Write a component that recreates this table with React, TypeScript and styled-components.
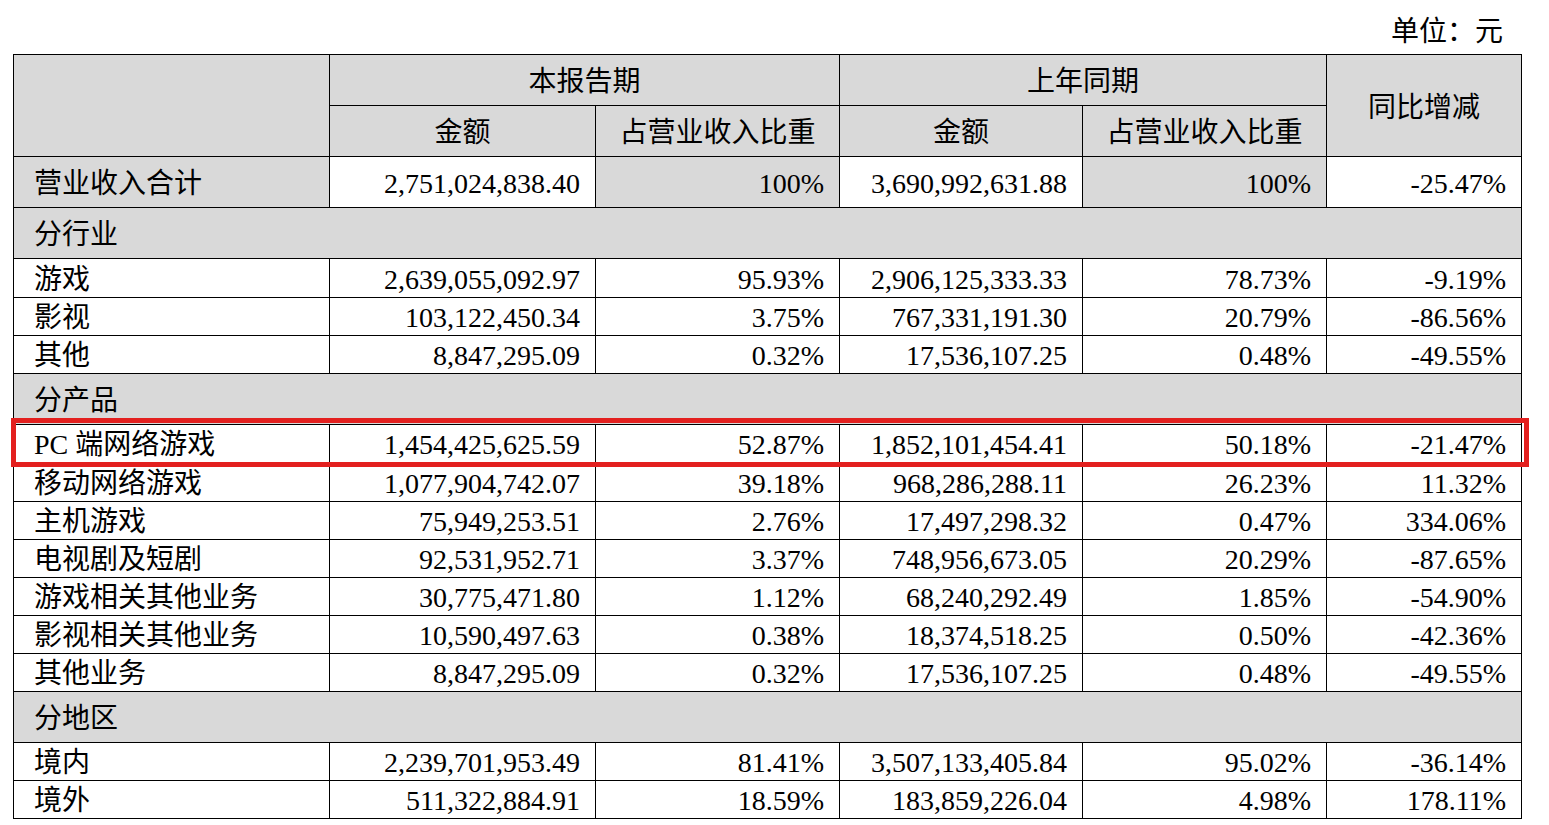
import React, { useLayoutEffect, useRef, useState } from 'react';
import styled, { createGlobalStyle } from 'styled-components';

type Row =
    | { kind: 'section'; label: string }
    | {
          kind: 'data';
          label: string;
          cur: string;
          curPct: string;
          prev: string;
          prevPct: string;
          change: string;
          highlight?: boolean;
          roomy?: boolean;
      };

const rows: Row[] = [
    { kind: 'section', label: '分行业' },
    { kind: 'data', label: '游戏', cur: '2,639,055,092.97', curPct: '95.93%', prev: '2,906,125,333.33', prevPct: '78.73%', change: '-9.19%', roomy: true },
    { kind: 'data', label: '影视', cur: '103,122,450.34', curPct: '3.75%', prev: '767,331,191.30', prevPct: '20.79%', change: '-86.56%' },
    { kind: 'data', label: '其他', cur: '8,847,295.09', curPct: '0.32%', prev: '17,536,107.25', prevPct: '0.48%', change: '-49.55%' },
    { kind: 'section', label: '分产品' },
    { kind: 'data', label: 'PC 端网络游戏', cur: '1,454,425,625.59', curPct: '52.87%', prev: '1,852,101,454.41', prevPct: '50.18%', change: '-21.47%', highlight: true },
    { kind: 'data', label: '移动网络游戏', cur: '1,077,904,742.07', curPct: '39.18%', prev: '968,286,288.11', prevPct: '26.23%', change: '11.32%', roomy: true },
    { kind: 'data', label: '主机游戏', cur: '75,949,253.51', curPct: '2.76%', prev: '17,497,298.32', prevPct: '0.47%', change: '334.06%' },
    { kind: 'data', label: '电视剧及短剧', cur: '92,531,952.71', curPct: '3.37%', prev: '748,956,673.05', prevPct: '20.29%', change: '-87.65%' },
    { kind: 'data', label: '游戏相关其他业务', cur: '30,775,471.80', curPct: '1.12%', prev: '68,240,292.49', prevPct: '1.85%', change: '-54.90%' },
    { kind: 'data', label: '影视相关其他业务', cur: '10,590,497.63', curPct: '0.38%', prev: '18,374,518.25', prevPct: '0.50%', change: '-42.36%' },
    { kind: 'data', label: '其他业务', cur: '8,847,295.09', curPct: '0.32%', prev: '17,536,107.25', prevPct: '0.48%', change: '-49.55%' },
    { kind: 'section', label: '分地区' },
    { kind: 'data', label: '境内', cur: '2,239,701,953.49', curPct: '81.41%', prev: '3,507,133,405.84', prevPct: '95.02%', change: '-36.14%' },
    { kind: 'data', label: '境外', cur: '511,322,884.91', curPct: '18.59%', prev: '183,859,226.04', prevPct: '4.98%', change: '178.11%' },
];

const colWidths = [316, 266, 244, 243, 244, 195];

const App = () => {
    const markRef = useRef<HTMLTableRowElement>(null);
    const [box, setBox] = useState<{ top: number; height: number } | null>(null);

    useLayoutEffect(() => {
        if (markRef.current) {
            setBox({
                top: markRef.current.offsetTop,
                height: markRef.current.offsetHeight,
            });
        }
    }, []);

    return (
        <>
            <GlobalStyle />
            <Page>
                <Unit>单位：元</Unit>
                <TableWrap>
                    <Table>
                        <colgroup>
                            {colWidths.map((w, i) => (
                                <col key={i} style={{ width: w }} />
                            ))}
                        </colgroup>
                        <thead>
                            <HeadRow>
                                <HeadCell rowSpan={2} />
                                <HeadCell colSpan={2}>本报告期</HeadCell>
                                <HeadCell colSpan={2}>上年同期</HeadCell>
                                <HeadCell rowSpan={2}>同比增减</HeadCell>
                            </HeadRow>
                            <HeadRow>
                                <HeadCell>金额</HeadCell>
                                <HeadCell>占营业收入比重</HeadCell>
                                <HeadCell>金额</HeadCell>
                                <HeadCell>占营业收入比重</HeadCell>
                            </HeadRow>
                        </thead>
                        <tbody>
                            <TallRow>
                                <LabelCell $shade>营业收入合计</LabelCell>
                                <NumCell>2,751,024,838.40</NumCell>
                                <NumCell $shade>100%</NumCell>
                                <NumCell>3,690,992,631.88</NumCell>
                                <NumCell $shade>100%</NumCell>
                                <NumCell>-25.47%</NumCell>
                            </TallRow>
                            {rows.map((r, i) =>
                                r.kind === 'section' ? (
                                    <TallRow key={i}>
                                        <LabelCell $shade colSpan={6}>
                                            {r.label}
                                        </LabelCell>
                                    </TallRow>
                                ) : (
                                    <DataRow
                                        key={i}
                                        $roomy={r.roomy}
                                        ref={r.highlight ? markRef : undefined}
                                    >
                                        <LabelCell>{r.label}</LabelCell>
                                        <NumCell>{r.cur}</NumCell>
                                        <NumCell>{r.curPct}</NumCell>
                                        <NumCell>{r.prev}</NumCell>
                                        <NumCell>{r.prevPct}</NumCell>
                                        <NumCell>{r.change}</NumCell>
                                    </DataRow>
                                ),
                            )}
                        </tbody>
                    </Table>
                    {box && (
                        <Highlight
                            style={{ top: box.top - 6, height: box.height + 11 }}
                        />
                    )}
                </TableWrap>
            </Page>
        </>
    );
};

export default App;

const GlobalStyle = createGlobalStyle`
    html, body {
        margin: 0;
        padding: 0;
        background: #ffffff;
    }
    body {
        font-family: "Liberation Serif", "Noto Sans CJK SC", serif;
        color: #000000;
    }
`;

const Page = styled.div`
    width: 1549px;
    padding: 16px 0 0 13px;
    box-sizing: border-box;
`;

const Unit = styled.div`
    width: 1509px;
    box-sizing: border-box;
    padding-right: 19px;
    text-align: right;
    font-size: 28px;
    line-height: 32px;
    margin-bottom: 6px;
`;

const TableWrap = styled.div`
    position: relative;
    width: 1509px;
`;

const Table = styled.table`
    width: 1509px;
    table-layout: fixed;
    border-collapse: collapse;
    font-size: 28px;
`;

const HeadRow = styled.tr`
    height: 51px;
`;

const TallRow = styled.tr`
    height: 51px;
`;

const DataRow = styled.tr<{ $roomy?: boolean }>`
    height: ${({ $roomy }) => ($roomy ? '39px' : '38px')};
`;

const HeadCell = styled.th`
    border: 1px solid #000;
    background: #d9d9d9;
    font-weight: 400;
    text-align: center;
    vertical-align: middle;
    padding: 4px 0 0 0;
    line-height: 30px;
`;

const LabelCell = styled.td<{ $shade?: boolean }>`
    border: 1px solid #000;
    background: ${({ $shade }) => ($shade ? '#d9d9d9' : '#ffffff')};
    text-align: left;
    padding: 3px 0 0 20px;
    line-height: 30px;
    white-space: nowrap;
`;

const NumCell = styled.td<{ $shade?: boolean }>`
    border: 1px solid #000;
    background: ${({ $shade }) => ($shade ? '#d9d9d9' : '#ffffff')};
    text-align: right;
    padding: 3px 15px 0 0;
    line-height: 30px;
    white-space: nowrap;
`;

const Highlight = styled.div`
    position: absolute;
    left: -2px;
    right: -7px;
    border: 5px solid #e3201f;
    box-sizing: border-box;
    pointer-events: none;
`;
